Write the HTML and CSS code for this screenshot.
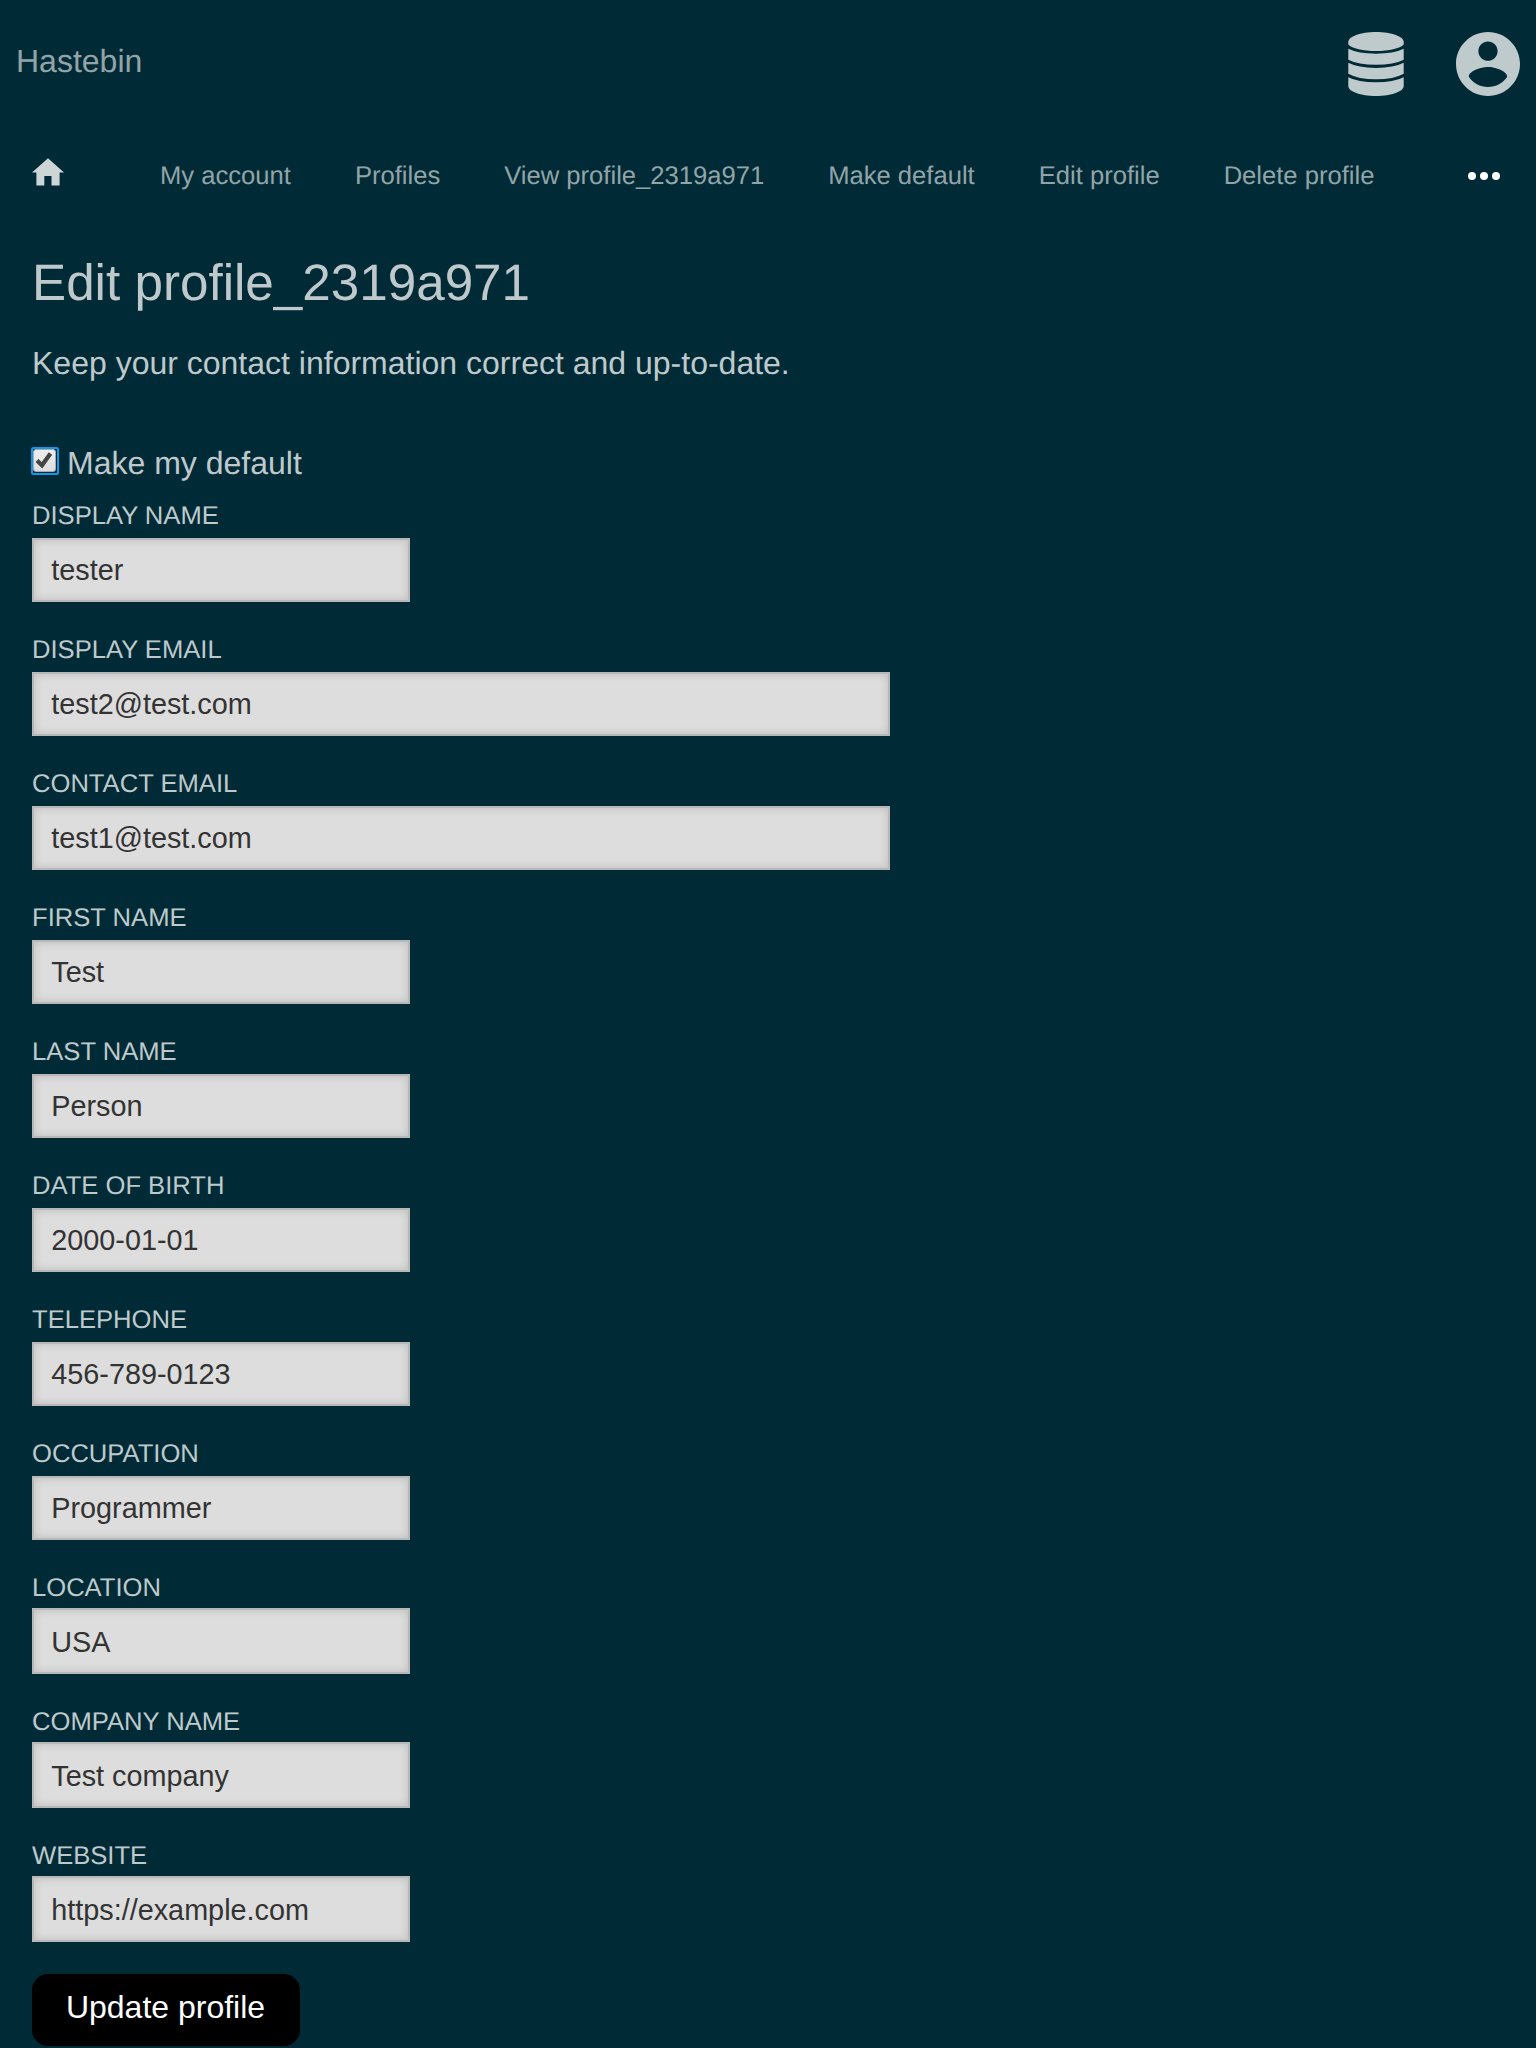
FILE: index.html
```html
<!DOCTYPE html>
<html lang="en">
<head>
<meta charset="utf-8">
<title>Edit profile</title>
<link rel="stylesheet" href="styles.css">
</head>
<body>
<header class="top">
  <a class="brand">Hastebin</a>
  <div class="top-icons">
    <svg class="db" viewBox="0 0 56 64"><path d="M28 0C43.500 0 55.700 4.500 55.700 10V12.500C52 16.500 41 19 28 19S4 16.500 .3 12.500V10C.3 4.500 12.500 0 28 0Z"/><path d="M.3 16.800Q10 21.700 28 21.700T55.700 16.800V27.700Q46 32.800 28 32.800T.3 27.700Z"/><path d="M.3 30.800Q10 35.900 28 35.900T55.700 30.800V41.800Q46 47.300 28 47.300T.3 41.800Z"/><path d="M.3 45.200Q10 50.300 28 50.300T55.700 45.200V54C55.700 59.500 43.500 64 28 64S.3 59.500 .3 54Z"/></svg>
    <svg class="user" viewBox="2 2 20 20"><path d="M12 2C6.480 2 2 6.480 2 12s4.480 10 10 10 10-4.480 10-10S17.520 2 12 2zm0 3c1.660 0 3 1.340 3 3s-1.340 3-3 3-3-1.340-3-3 1.340-3 3-3zm0 14.200c-2.500 0-4.710-1.280-6-3.220.030-1.990 4-3.080 6-3.080 1.990 0 5.970 1.090 6 3.080-1.290 1.940-3.500 3.220-6 3.220z"/></svg>
  </div>
</header>
<nav class="menu">
  <svg class="home" viewBox="0 0 32 28"><path d="M16 .3L32 14.400H27.600V27.500H19.500V18H12.300V27.500H4.400V14.400H0Z"/></svg>
  <a>My account</a><a>Profiles</a><a>View profile_2319a971</a><a>Make default</a><a>Edit profile</a><a>Delete profile</a>
  <svg class="more" viewBox="0 0 32 8"><circle cx="4" cy="4" r="4"/><circle cx="16" cy="4" r="4"/><circle cx="28" cy="4" r="4"/></svg>
</nav>
<main>
  <h1>Edit profile_2319a971</h1>
  <p class="intro">Keep your contact information correct and up-to-date.</p>
  <form>
    <label class="check"><svg class="box" viewBox="0 0 28 28"><defs><linearGradient id="g" x2="0" y2="1"><stop stop-color="#eee"/><stop offset="1" stop-color="#ddd"/></linearGradient></defs><rect x="1" y="1" width="26" height="26" rx="1.500" fill="none" stroke="#1596e8" stroke-width="2"/><rect x="2.500" y="2.500" width="22" height="22" rx="2.500" fill="url(#g)" stroke="#a9a9a9"/><path d="M6 13.500L11 18.300L19.500 6.500" fill="none" stroke="#444" stroke-width="4.200"/></svg>Make my default</label>
    <div class="field"><label>DISPLAY NAME</label><input value="tester"></div>
    <div class="field wide"><label>DISPLAY EMAIL</label><input value="test2@test.com"></div>
    <div class="field wide"><label>CONTACT EMAIL</label><input value="test1@test.com"></div>
    <div class="field"><label>FIRST NAME</label><input value="Test"></div>
    <div class="field"><label>LAST NAME</label><input value="Person"></div>
    <div class="field"><label>DATE OF BIRTH</label><input value="2000-01-01"></div>
    <div class="field"><label>TELEPHONE</label><input value="456-789-0123"></div>
    <div class="field"><label>OCCUPATION</label><input value="Programmer"></div>
    <div class="field tall"><label>LOCATION</label><input value="USA"></div>
    <div class="field tall"><label>COMPANY NAME</label><input value="Test company"></div>
    <div class="field tall"><label>WEBSITE</label><input value="https://example.com"></div>
    <button type="button">Update profile</button>
  </form>
</main>
</body>
</html>
```
FILE: styles.css
```css
* { box-sizing: border-box; }
body { margin: 0; height: 2048px; overflow: hidden; background: #002b36; color: #bfc9cc; font: 32px/40px "Liberation Sans", Arial, sans-serif; text-rendering: geometricPrecision; }
svg { display: block; fill: #bfcacd; }
.top { display: flex; justify-content: space-between; height: 128px; padding: 32px 16px 0; }
.brand { color: #93a4a8; line-height: 58px; }
.top-icons { display: flex; gap: 52px; }
.db { width: 56px; height: 64px; }
.user { width: 64px; height: 64px; }
.menu { display: flex; height: 96px; padding: 0 36px 0 32px; font-size: 25.6px; line-height: 96px; color: #93a4a8; }
.menu a { margin-right: 64px; white-space: nowrap; }
.home { width: 32px; height: 28px; margin: 30px 96px 0 0; fill: #cdd5d7; }
.more { width: 32px; height: 8px; margin: 44px 0 0 auto; fill: #fff; }
main { padding: 27px 32px 0; }
h1 { margin: 0; font-size: 51.200px; font-weight: 400; line-height: 64px; }
.intro { margin: 28px 0 0; }
.check { display: flex; height: 40px; margin-top: 60px; }
.box { width: 28px; height: 28px; margin: 4px 8px 0 -1px; }
.field { display: flex; flex-direction: column; height: 134px; padding-top: 17px; }
.field label { height: 38px; font-size: 25.600px; line-height: 32px; }
input { width: 378px; height: 64px; padding: 0 17.280px; border: 2px solid #b8b8b8; border-radius: 0; background: #ddd; box-shadow: inset 0 0 8px #bbb; color: #333; font: 28.800px "Liberation Sans", Arial, sans-serif; }
.wide input { width: 858px; }
.tall label { height: 36px; }
.tall input { height: 66px; padding-top: 2px; }
button { display: block; width: 268px; height: 72px; margin-top: 17px; padding: 0 1px 6px 0; border: 0; border-radius: 16px; background: #000; color: #fff; font: 32px "Liberation Sans", Arial, sans-serif; }
```
